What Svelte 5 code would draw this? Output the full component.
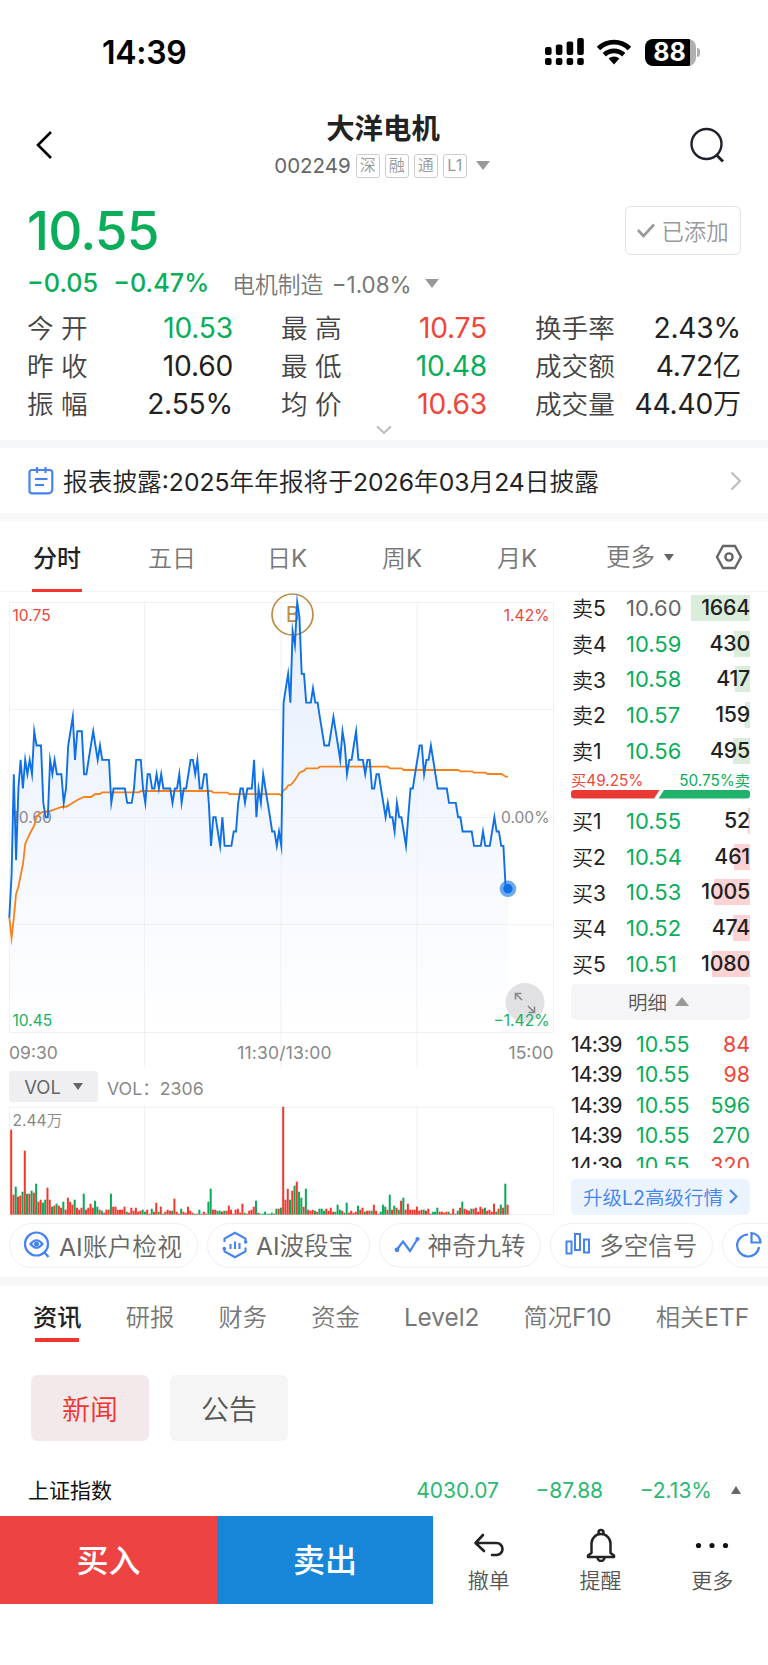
<script>
  const tags = ['深', '融', '通', 'L1'];

  const stats = [
    { label: '今 开', value: '10.53', tone: 'down' },
    { label: '最 高', value: '10.75', tone: 'up' },
    { label: '换手率', value: '2.43%', tone: '' },
    { label: '昨 收', value: '10.60', tone: '' },
    { label: '最 低', value: '10.48', tone: 'down' },
    { label: '成交额', value: '4.72亿', tone: '' },
    { label: '振 幅', value: '2.55%', tone: '' },
    { label: '均 价', value: '10.63', tone: 'up' },
    { label: '成交量', value: '44.40万', tone: '' }
  ];

  const periods = ['分时', '五日', '日K', '周K', '月K'];

  const sells = [
    { label: '卖5', price: '10.60', count: 1664, width: 59, flat: true },
    { label: '卖4', price: '10.59', count: 430, width: 16 },
    { label: '卖3', price: '10.58', count: 417, width: 15 },
    { label: '卖2', price: '10.57', count: 159, width: 5 },
    { label: '卖1', price: '10.56', count: 495, width: 17 }
  ];
  const buys = [
    { label: '买1', price: '10.55', count: 52, width: 2 },
    { label: '买2', price: '10.54', count: 461, width: 16 },
    { label: '买3', price: '10.53', count: 1005, width: 36 },
    { label: '买4', price: '10.52', count: 474, width: 17 },
    { label: '买5', price: '10.51', count: 1080, width: 38 }
  ];
  const trades = [
    { count: 84, tone: 'up' },
    { count: 98, tone: 'up' },
    { count: 596, tone: 'down' },
    { count: 270, tone: 'down' },
    { count: 320, tone: 'up' }
  ];

  const newsTabs = ['资讯', '研报', '财务', '资金', 'Level2', '简况F10', '相关ETF'];

  // minute prices, in cents away from the 10.60 close
  const prices = [
    -7, -4, 3, -3, 2, 4, 2, 4, 3, 4, 3, 6, 5, 5, 5, 1, 0, 0, 4, 3, 4, 3, 3, 3, 1, 2, 5, 6, 7, 4,
    6, 6, 6, 3, 3, 4, 5, 6, 5, 4, 5, 4, 4, 4, 4, 1, 2, 2, 2, 2, 2, 2, 1, 1, 1, 2, 4, 4, 4, 2,
    1, 3, 3, 2, 2, 3, 2, 3, 2, 2, 2, 2, 1, 2, 2, 3, 1, 2, 2, 3, 4, 4, 3, 4, 2, 2, 3, 3, 1, -2,
    0, 0, -1, -2, 0, -2, -2, -2, -2, -1, -1, 1, 2, 2, 1, 2, 2, 2, 4, 0, 2, 1, 3, 2, 1, 0, -1, -1, -2, -1,
    -2, 8, 9, 10, 8, 13, 12, 15, 14, 10, 10, 8, 8, 8, 9, 8, 8, 7, 6, 5, 5, 5, 6, 7, 6, 5, 4, 6, 5, 3,
    4, 4, 5, 6, 4, 4, 4, 3, 4, 4, 2, 2, 3, 3, 2, 1, 0, 1, 0, 0, -1, 1, 0, 0, -1, -2, 0, 2, 2, 3,
    4, 5, 5, 3, 4, 4, 5, 4, 3, 2, 2, 2, 2, 2, 1, 1, 1, 1, 0, 0, -1, -1, -1, -1, -1, -2, -2, -2, -2, -1,
    -2, -2, -2, -1, 0, -1, -1, -2, -2, -5, -5
  ];

  const average =
    '9.3,325 11.6,346 13.9,325 16.1,302 18.4,294.7 20.7,283 23,272 25.2,252 27.4,247 29.7,242 34,234 36.5,225 38.7,222.5 42,220 50,219 61.5,215 66.7,214.5 77.3,208 84,205 91,205 95.3,202 100,202 102,200.3 138.7,200.3 141,199 211,199 213.5,200.6 227.5,200.6 229.5,202.2 279.5,202.2 281.5,203.5 282.5,199.3 286,196.7 288.3,193.3 290.7,193 295,188 299.5,180.6 304,178.7 306.3,176.3 317.7,176.3 320,174.7 387.7,174.7 390,176.3 401.5,176.3 403.7,178 458,178 460.5,179.3 472,179.3 474,180.7 485.5,180.7 487.7,182 501.5,182 505.7,184.7 508,184.7';

  // minute volumes, r = rise, g = fall
  const volumes =
    'r85 r20 g28 r18 r19 g23 r64 g21 r21 g24 r22 g31 r13 r15 g12 g15 r27 r15 g8 r9 g11 r9 r7 g13 r5 r17 r13 r10 g15 r7 r5 r7 g21 r5 r7 r11 r7 g14 g8 r5 g4 r2 r5 r5 g21 r8 r8 r5 r5 r5 r8 g3 r2 r7 r4 r7 r3 r4 g5 g3 r5 r1 g6 r3 r12 g3 r8 g1 r3 r5 r4 g4 r16 r3 r1 g6 r3 r2 r8 r4 r2 g1 r1 g5 r1 r3 r1 g13 g26 r5 r5 g4 g4 r3 g4 r4 r9 r5 r1 r5 r6 r2 r11 g2 r1 r4 r5 r8 g14 r2 g1 g1 g3 g1 g1 g2 r1 g6 r6 g7 r108 r15 r26 g15 r24 g29 r33 g23 g17 r8 g26 r5 r4 r5 g4 r3 g6 g6 g4 r6 r4 r7 r3 g3 g10 g5 r4 g2 g12 r2 r4 r2 r3 g9 r5 r7 g3 r4 r4 g4 r10 r4 r1 g3 g10 g8 r5 g20 r5 g9 r7 g5 r14 g17 r5 r11 r5 r5 r5 r8 r4 r5 g5 r4 r6 r1 g3 g3 g7 r3 r3 r2 r3 g3 r1 r6 r1 g4 r7 g13 r6 r5 r4 g6 r6 r7 r3 r8 r6 g7 r4 r5 r3 r11 g3 r6 g10 r7 g31 r10'
      .split(' ')
      .map((v) => ({ tone: v[0], height: Number(v.slice(1)) }));

  const step = 544 / 240;
  const left = 9.3;
  const points = prices
    .map((p, i) => `${(left + i * step).toFixed(1)},${(225.2 - p * 14.33).toFixed(1)}`)
    .join(' ');
  const lastX = left + (prices.length - 1) * step;
  const area = `${left},440 ${points} ${lastX},440`;
</script>

<div class="phone">
  <header class="status">
    <span class="time">14:39</span>
    <div class="status-icons">
      <svg width="40" height="28" viewBox="0 0 40 28">
        <rect x="0" y="9" width="6.6" height="8" rx="2" />
        <rect x="10.8" y="6.5" width="6.6" height="10.5" rx="2" />
        <rect x="21.6" y="3.5" width="6.6" height="13.5" rx="2" />
        <rect x="32.2" y="0" width="6.6" height="17" rx="2" />
        <rect x="0" y="20" width="6.6" height="7" rx="2" />
        <rect x="10.8" y="20" width="6.6" height="7" rx="2" />
        <rect x="21.6" y="20" width="6.6" height="7" rx="2" />
        <rect x="32.2" y="20" width="6.6" height="7" rx="2" />
      </svg>
      <svg class="wifi" width="36" height="26" viewBox="0 0 36 26">
        <path d="M2.5 9.5a22 22 0 0 1 31 0M8.3 15.7a14 14 0 0 1 19.4 0" fill="none" stroke="#000" stroke-width="4.8" />
        <path d="M18 25.5l-5.4-5.9a8.2 8.2 0 0 1 10.8 0z" />
      </svg>
      <div class="battery"><span>88</span></div>
      <i class="battery-cap"></i>
    </div>
  </header>

  <div class="title-bar">
    <svg width="18" height="30" viewBox="0 0 18 30" fill="none" stroke="#000" stroke-width="2.6">
      <path d="M16 2L3 15l13 13" />
    </svg>
    <div class="title">
      <h1>大洋电机</h1>
      <div class="code">
        <span>002249</span>
        {#each tags as tag}<b>{tag}</b>{/each}
        <i class="tri"></i>
      </div>
    </div>
    <svg width="38" height="36" viewBox="0 0 38 36" fill="none" stroke="#20222b" stroke-width="2.4">
      <circle cx="18.5" cy="17" r="15" />
      <path d="M28.5 28l6.5 6.5" stroke-width="3" />
    </svg>
  </div>

  <section class="quote">
    <div class="price-row">
      <strong>10.55</strong>
      <button class="added">
        <svg width="18" height="15" viewBox="0 0 18 15" fill="none" stroke="#999" stroke-width="2.6"><path d="M1 7l5.5 6L17 1.5" /></svg>
        <span>已添加</span>
      </button>
    </div>
    <div class="change">
      <span class="down">−0.05</span>
      <span class="down pct">−0.47%</span>
      <span class="sector">电机制造 <em>−1.08%</em></span>
      <i class="tri"></i>
    </div>
    <div class="stats">
      {#each stats as s}
        <div class="stat"><span>{s.label}</span><b class={s.tone}>{s.value}</b></div>
      {/each}
    </div>
    <svg class="expand" width="18" height="10" viewBox="0 0 18 10" fill="none" stroke="#bbb" stroke-width="2"><path d="M2 1.5l7 6.5 7-6.5" /></svg>
  </section>

  <div class="notice">
    <svg width="26" height="29" viewBox="0 0 26 29" fill="none" stroke="#4483f0" stroke-width="2.2">
      <path d="M5 4H3.8A2.3 2.3 0 0 0 1.5 6.3V25a2.3 2.3 0 0 0 2.3 2.3h16.5a4 4 0 0 0 4-4V6.3A2.3 2.3 0 0 0 22 4H5M9 1v6M17.5 1v6M7 13h12.5M7 19h9" />
    </svg>
    <span>报表披露:2025年年报将于2026年03月24日披露</span>
    <svg width="12" height="20" viewBox="0 0 12 20" fill="none" stroke="#bbb" stroke-width="2"><path d="M1.5 1.5L10 10l-8.5 8.5" /></svg>
  </div>

  <nav class="periods">
    {#each periods as p, i}<span class:active={i === 0}>{p}</span>{/each}
    <span class="more">更多<i class="tri small"></i></span>
    <svg width="28" height="26" viewBox="0 0 28 26" fill="none" stroke="#666" stroke-width="2.4">
      <path d="M8 2h12l6 11-6 11H8L2 13z" /><circle cx="14" cy="13" r="3.6" />
    </svg>
  </nav>

  <div class="market">
    <div class="charts">
      <svg class="chart" width="562" height="475" viewBox="0 0 562 475">
        <defs>
          <linearGradient id="fill" x1="0" y1="0" x2="0" y2="1">
            <stop offset="0" stop-color="#e6eefd" />
            <stop offset="1" stop-color="#ffffff" />
          </linearGradient>
        </defs>
        <polygon points={area} fill="url(#fill)" />
        <g stroke="#eceef2" stroke-opacity="0.8">
          <path d="M9.5 10.5H553.5M9.5 117.5H553.5M9.5 225.5H553.5M9.5 332.5H553.5M9.5 440.5H553.5" />
          <path d="M9.5 10.5V440M144.5 10.5V475M281 10.5V475M417 10.5V475M553.5 10.5V440" />
        </g>
        <g font-size="15.6">
          <text x="12.5" y="29" fill="#f0453a">10.75</text>
          <text x="549.5" y="29" fill="#f0453a" text-anchor="end">1.42%</text>
          <text x="12.5" y="231" fill="#888">10.60</text>
          <text x="549.5" y="231" fill="#888" text-anchor="end">0.00%</text>
          <text x="12.5" y="433.5" fill="#17b163">10.45</text>
        </g>
        <circle cx="292.5" cy="22.5" r="20.5" fill="none" stroke="#bf8b48" stroke-width="1.7" />
        <text x="292.5" y="30" font-size="21" fill="#bf8b48" text-anchor="middle">B</text>
        <polyline points={average} fill="none" stroke="#f7811b" stroke-width="1.8" stroke-miterlimit="12" />
        <polyline points={points} fill="none" stroke="#0f70e6" stroke-width="1.9" stroke-miterlimit="12" />
        <circle cx={lastX} cy="296.8" r="8.3" fill="#0f70e6" fill-opacity="0.6" />
        <circle cx={lastX} cy="296.8" r="4.7" fill="#0f70e6" />
        <circle cx="525" cy="410.5" r="19.5" fill="#dcdcde" fill-opacity="0.85" />
        <path d="M522 408l-6.5-6.5m0 6v-6h6M528 414l6.5 6.5m0-6v6h-6" fill="none" stroke="#888" stroke-width="1.6" />
        <text x="549.5" y="433.5" font-size="15.6" fill="#17b163" text-anchor="end">−1.42%</text>
        <g font-size="17.5" fill="#888">
          <text x="9" y="467">09:30</text>
          <text x="284.5" y="467" text-anchor="middle" letter-spacing="0.2">11:30/13:00</text>
          <text x="553.5" y="467" text-anchor="end">15:00</text>
        </g>
      </svg>

      <div class="vol-head">
        <span class="vol-button">VOL<i class="tri small"></i></span>
        <span>VOL：2306</span>
      </div>

      <svg class="chart" width="562" height="112" viewBox="0 0 562 112">
        <path d="M9.5 2.5H553.5V109.5H9.5zM144.5 0V109M281 0V109M417 0V109" fill="none" stroke="#eceef2" stroke-opacity="0.8" />
        <text x="12.5" y="20.5" font-size="15.6" fill="#888">2.44万</text>
        {#each volumes as v, i}
          <rect x={10.2 + i * step} y={109.7 - v.height} width="2" height={v.height} fill={v.tone === 'r' ? '#f0382e' : '#0aa858'} />
        {/each}
      </svg>
    </div>

    <aside class="book">
      <div class="levels sell">
        {#each sells as l}
          <div class="level">
            <span>{l.label}</span>
            <b class:down={!l.flat} class:flat={l.flat}>{l.price}</b>
            <em><i style="width: {l.width}px"></i>{l.count}</em>
          </div>
        {/each}
      </div>
      <div class="ratio">
        <div class="ratio-text"><span class="up">买49.25%</span><span class="down">50.75%卖</span></div>
        <svg width="179" height="9" viewBox="0 0 179 9">
          <path d="M3 0H88.5L83 8.5H3a3 3 0 0 1-3-3V3a3 3 0 0 1 3-3z" fill="#e93a36" />
          <path d="M93 0h83a3 3 0 0 1 3 3v2.5a3 3 0 0 1-3 3H87.5z" fill="#20b26b" />
        </svg>
      </div>
      <div class="levels buy">
        {#each buys as l}
          <div class="level">
            <span>{l.label}</span>
            <b class="down">{l.price}</b>
            <em><i style="width: {l.width}px"></i>{l.count}</em>
          </div>
        {/each}
      </div>
      <div class="detail">明细<i class="tri top"></i></div>
      <div class="trades">
        {#each trades as t}
          <div class="trade"><span>14:39</span><b>10.55</b><em class={t.tone}>{t.count}</em></div>
        {/each}
      </div>
      <div class="upgrade">
        升级L2高级行情
        <svg width="9" height="15" viewBox="0 0 9 15" fill="none" stroke="#4483f0" stroke-width="2"><path d="M1 1l6.5 6.5L1 14" /></svg>
      </div>
    </aside>
  </div>

  <div class="tools">
    <div class="tool first">
      <svg width="28" height="28" viewBox="0 0 28 28" fill="none" stroke="#4483f0" stroke-width="2.2">
        <circle cx="13.5" cy="13" r="11.5" /><path d="M21.5 21.5l4 4.5M7.5 13q6-7.5 12 0-6 7.5-12 0z" /><circle cx="13.5" cy="13" r="1.4" fill="#4483f0" />
      </svg>
      AI账户检视
    </div>
    <div class="tool">
      <svg width="28" height="28" viewBox="0 0 28 28" fill="none" stroke="#4483f0" stroke-width="2.1">
        <path d="M3.5 11V7.5L14 1.8l10.5 5.7V10M24.5 16.5v4L14 26.2 3.5 20.5V18M9.5 13v5M14 10.5V18M18.5 12v6" />
        <circle cx="24.7" cy="11" r="1.8" fill="#4483f0" stroke="none" /><circle cx="3.3" cy="17.5" r="1.8" fill="#4483f0" stroke="none" />
      </svg>
      AI波段宝
    </div>
    <div class="tool">
      <svg width="28" height="28" viewBox="0 0 28 28" fill="none" stroke="#4483f0" stroke-width="2.2">
        <path d="M4 18.5l6-8 7 9.5 7.5-12" /><circle cx="4" cy="18.8" r="2.4" fill="#4483f0" stroke="none" /><circle cx="24.5" cy="8" r="2.1" fill="#4483f0" stroke="none" />
      </svg>
      神奇九转
    </div>
    <div class="tool">
      <svg width="28" height="28" viewBox="0 0 28 28" fill="none" stroke="#4483f0" stroke-width="2">
        <path d="M2.5 10.5h5v12h-5zM11 3h5v16h-5zM20 8.5h5v13h-5z" />
      </svg>
      多空信号
    </div>
    <div class="tool">
      <svg width="28" height="28" viewBox="0 0 28 28" fill="none" stroke="#4483f0" stroke-width="2.2">
        <path d="M12 3.5a11 11 0 1 0 11 12.500M15.500 2v9.500H24.500A9.500 9.500 0 0 0 15.500 2z" />
      </svg>
    </div>
  </div>

  <nav class="news-tabs">
    {#each newsTabs as t, i}<span class:active={i === 0}>{t}</span>{/each}
  </nav>

  <div class="chips">
    <button class="chip on">新闻</button>
    <button class="chip">公告</button>
  </div>

  <div class="index">
    <span class="name">上证指数</span>
    <span>4030.07</span>
    <span>−87.88</span>
    <span>−2.13%</span>
    <i class="tri top"></i>
  </div>

  <footer>
    <button class="buy-btn">买入</button>
    <button class="sell-btn">卖出</button>
    <div class="action">
      <svg width="34" height="34" viewBox="0 0 34 34" fill="none" stroke="#222" stroke-width="2.6" stroke-linecap="round" stroke-linejoin="round"><path d="M11 7L3.5 15l8.500 8M4 15h20.500a6 6 0 0 1 0 12H20" /></svg>
      撤单
    </div>
    <div class="action">
      <svg width="34" height="34" viewBox="0 0 34 34" fill="none" stroke="#222" stroke-width="2.5" stroke-linejoin="round"><path d="M7.500 25V15.500a9.500 9.500 0 0 1 19 0V25l3.500 2.500V29H4v-1.500zM14.500 6V4.500a2.500 2.500 0 0 1 5 0V6M13.500 29.500a3.500 3.500 0 0 0 7 0" /></svg>
      提醒
    </div>
    <div class="action">
      <svg width="34" height="34" viewBox="0 0 34 34" fill="#111"><circle cx="3.5" cy="17.5" r="2.6" /><circle cx="17" cy="17.5" r="2.6" /><circle cx="30.5" cy="17.5" r="2.6" /></svg>
      更多
    </div>
  </footer>
</div>

<style>
  :global(body) {
    margin: 0;
    background: #fff;
  }

  .phone {
    width: 768px;
    height: 1665px;
    overflow: hidden;
    background: #fff;
    color: #222;
    font-family: Inter, "Noto Sans CJK SC DemiLight", "Noto Sans CJK SC Light", "Noto Sans CJK SC", sans-serif;
    white-space: nowrap;
  }

  .phone * {
    box-sizing: border-box;
  }

  /* the light face has no heavier weights */
  h1,
  .periods .active,
  .news-tabs .active,
  .index .name,
  .ratio-text,
  .buy-btn,
  .sell-btn {
    font-family: Inter, "Noto Sans CJK SC", sans-serif;
  }

  svg {
    flex: none;
    display: block;
  }

  button {
    font-family: inherit;
    border: none;
    padding: 0;
  }

  b,
  em,
  i {
    font-weight: inherit;
    font-style: normal;
  }

  .up { color: #f0453a; }
  .down { color: #0aad5a; }
  .flat { color: #666; }

  .tri {
    border: 7px solid transparent;
    border-top: 9px solid #999;
    border-bottom: 0;
  }

  .tri.small {
    border-width: 7px 5px 0;
    border-top-color: #666;
  }

  .tri.top {
    border: 7px solid transparent;
    border-top: 0;
    border-bottom: 9px solid #999;
  }

  /* status bar */
  .status {
    height: 104px;
    display: flex;
    justify-content: space-between;
    align-items: center;
    padding: 0 68px 0 102px;
    color: #000;
  }

  .time {
    font-size: 32px;
    font-weight: 600;
    letter-spacing: -0.3px;
  }

  .status-icons {
    display: flex;
    align-items: center;
  }

  .wifi {
    margin-left: 11px;
  }

  .battery {
    margin-left: 13px;
    width: 51px;
    height: 27px;
    padding-right: 2px;
    border-radius: 8px;
    background: linear-gradient(to right, #000 45px, #b0b0b0 45px);
    color: #fff;
    font-size: 25px;
    font-weight: 700;
    line-height: 26px;
    text-align: center;
  }

  .battery-cap {
    width: 3px;
    height: 9px;
    margin-left: 1px;
    border-radius: 0 3px 3px 0;
    background: #b0b0b0;
  }

  /* title */
  .title-bar {
    height: 82px;
    display: flex;
    justify-content: space-between;
    align-items: center;
    padding: 0 42px 0 35px;
  }

  .title {
    display: flex;
    flex-direction: column;
    align-items: center;
    width: 230px;
    margin-left: 25px;
    padding-top: 3px;
  }

  h1 {
    margin: 0;
    font-size: 28.4px;
    line-height: 38px;
    font-weight: 700;
  }

  .code {
    display: flex;
    align-items: center;
    gap: 5px;
    height: 36px;
    margin-left: -2px;
    color: #666;
    font-size: 20.5px;
  }

  .code b {
    width: 24px;
    height: 24px;
    border: 1.5px solid #ccc;
    border-radius: 3px;
    color: #999;
    font-size: 16px;
    line-height: 21px;
    text-align: center;
  }

  .code .tri {
    margin-left: 4px;
  }

  /* quote */
  .quote {
    height: 262px;
    padding: 20px 27px 0;
    border-bottom: 8px solid #f6f7f9;
  }

  .price-row {
    display: flex;
    justify-content: space-between;
    height: 49px;
    align-items: center;
  }

  .price-row strong {
    color: #0aad5a;
    font-size: 53px;
    font-weight: 500;
    letter-spacing: -0.8px;
  }

  .added {
    width: 116px;
    height: 49px;
    display: flex;
    align-items: center;
    justify-content: center;
    gap: 6px;
    background: #fff;
    border: 1.5px solid #e3e3e3;
    border-radius: 6px;
    color: #999;
    font-size: 22.4px;
  }

  .added span {
    padding-bottom: 2px;
  }

  .change {
    display: flex;
    align-items: center;
    height: 54px;
    padding-top: 2px;
    font-size: 25.2px;
    font-weight: 500;
  }

  .pct {
    margin-left: 15px;
  }

  .sector {
    margin-left: 23px;
    color: #777;
    font-size: 22.8px;
    font-weight: 400;
  }

  .sector em {
    margin-left: 2px;
    font-size: 22.4px;
  }

  .change .tri {
    margin-left: 13px;
  }

  .stats {
    display: grid;
    grid-template-columns: repeat(3, 206px);
    justify-content: space-between;
    grid-auto-rows: 37.7px;
    align-items: center;
    padding-top: 1px;
  }

  .stat {
    display: flex;
    justify-content: space-between;
    align-items: center;
    line-height: 37px;
  }

  .stat span {
    color: #444;
    font-size: 26.6px;
  }

  .stat b {
    font-size: 28.2px;
    letter-spacing: -0.2px;
  }

  .expand {
    margin: 2px auto 0;
  }

  .notice {
    height: 73px;
    display: flex;
    align-items: center;
    padding: 0 26px 0 28px;
    border-bottom: 8px solid #f8f8f9;
    font-size: 24.7px;
  }

  .notice span {
    flex: 1;
    margin-left: 9px;
    padding-bottom: 1px;
  }

  /* period tabs */
  .periods {
    height: 71px;
    display: flex;
    align-items: center;
    padding: 2px 0 0 32px;
    border-bottom: 1.5px solid #f3f4f6;
    color: #777;
    font-size: 24px;
  }

  .periods span {
    width: 50px;
    height: 69px;
    line-height: 71px;
    margin-right: 65px;
    text-align: center;
  }

  .periods .active {
    color: #222;
    font-weight: 500;
    border-bottom: 3px solid #f0342f;
  }

  .periods .more {
    display: flex;
    align-items: center;
    gap: 9px;
    width: 76px;
    margin: 0 33px 0 -1px;
    font-size: 24.5px;
  }

  /* chart and order book */
  .market {
    display: flex;
    height: 626px;
  }

  .charts {
    width: 562px;
  }

  .vol-head {
    display: flex;
    align-items: center;
    gap: 9px;
    height: 38px;
    padding: 4px 9px 3px;
    color: #888;
    font-size: 17.7px;
  }

  .vol-button {
    width: 89px;
    height: 31px;
    display: flex;
    align-items: center;
    justify-content: center;
    gap: 12px;
    border-radius: 3px;
    background: #efeff2;
    color: #666;
    font-size: 18.5px;
  }

  .book {
    width: 179px;
    margin-left: 9px;
  }

  .levels {
    height: 177px;
  }

  .sell {
    height: 182px;
    margin-top: -2px;
  }

  .level {
    display: grid;
    grid-template-columns: 55px 57px 1fr;
    align-items: center;
    height: 35.7px;
    font-size: 22px;
  }

  .level span {
    font-size: 21px;
    padding: 0 0 1px 1px;
  }

  .level em {
    position: relative;
    z-index: 0;
    height: 26px;
    line-height: 25px;
    text-align: right;
    font-size: 21.3px;
    font-weight: 500;
    letter-spacing: -0.2px;
  }

  .level i {
    position: absolute;
    z-index: -1;
    right: 0;
    top: 0;
    height: 26px;
    background: #d9edda;
  }

  .buy .level i {
    background: #fbd3d3;
  }

  .ratio {
    height: 31px;
  }

  .ratio-text {
    display: flex;
    justify-content: space-between;
    height: 18px;
    line-height: 17px;
    font-size: 15.3px;
  }

  .detail {
    display: flex;
    justify-content: center;
    align-items: center;
    gap: 8px;
    height: 36px;
    margin-top: 4px;
    padding: 0 4px 2px 0;
    border-radius: 5px;
    background: #f5f5f8;
    color: #555;
    font-size: 19.5px;
  }

  .trades {
    height: 139px;
    margin-top: 9px;
    overflow: hidden;
  }

  .trade {
    display: grid;
    grid-template-columns: 65px 60px 1fr;
    height: 30.3px;
    line-height: 30.5px;
    font-size: 21.4px;
  }

  .trade span {
    letter-spacing: -0.9px;
  }

  .trade b {
    color: #0aad5a;
  }

  .trade em {
    text-align: right;
  }

  .upgrade {
    display: flex;
    justify-content: center;
    align-items: center;
    gap: 6px;
    height: 36px;
    margin-top: 11px;
    padding-bottom: 2px;
    border-radius: 5px;
    background: #eaf3fe;
    color: #4483f0;
    font-size: 19.5px;
  }

  /* tool pills */
  .tools {
    display: flex;
    gap: 9px;
    height: 68px;
    padding: 5px 0 9px 9px;
    border-bottom: 9px solid #f7f7f8;
    overflow: hidden;
  }

  .tool {
    flex: none;
    display: flex;
    align-items: center;
    gap: 7px;
    width: 162.6px;
    height: 45px;
    padding: 0 0 2px 13px;
    border: 1.5px solid #f0f0f2;
    border-radius: 23px;
    color: #666;
    font-size: 24.5px;
  }

  .tool.first {
    width: 189px;
    gap: 8px;
    font-size: 24.8px;
  }

  .news-tabs {
    display: flex;
    justify-content: space-between;
    height: 56px;
    padding: 0 19px 0 33px;
    color: #777;
    font-size: 24.3px;
    line-height: 63px;
  }

  .news-tabs .active {
    color: #222;
    font-weight: 500;
    background: linear-gradient(#f0342f, #f0342f) center bottom / 44px 4px no-repeat;
  }

  .chips {
    display: flex;
    gap: 21px;
    padding: 33px 0 0 31px;
  }

  .chip {
    width: 118px;
    height: 66px;
    border-radius: 6px;
    background: #f5f5f5;
    color: #555;
    font-size: 28px;
  }

  .chip.on {
    background: #f3e9ea;
    color: #f0342f;
  }

  .index {
    display: flex;
    align-items: center;
    height: 75px;
    padding: 23px 27px 0 28px;
    font-size: 21px;
    color: #2cb872;
  }

  .index .name {
    flex: 1;
    padding-bottom: 3px;
    color: #111;
  }

  .index span + span {
    margin-left: 36.5px;
  }

  .index .tri {
    margin-left: 19px;
    border-width: 0 5.5px 8px;
    border-bottom-color: #666;
  }

  footer {
    display: flex;
    height: 88px;
  }

  .buy-btn,
  .sell-btn {
    width: 217px;
    padding-bottom: 4px;
    background: #ee4343;
    color: #fff;
    font-size: 32px;
    font-weight: 500;
  }

  .sell-btn {
    width: 216px;
    background: #1886d8;
  }

  .action {
    flex: 1;
    display: flex;
    flex-direction: column;
    align-items: center;
    padding-top: 12px;
    color: #555;
    font-size: 21px;
    line-height: 37px;
  }
</style>
